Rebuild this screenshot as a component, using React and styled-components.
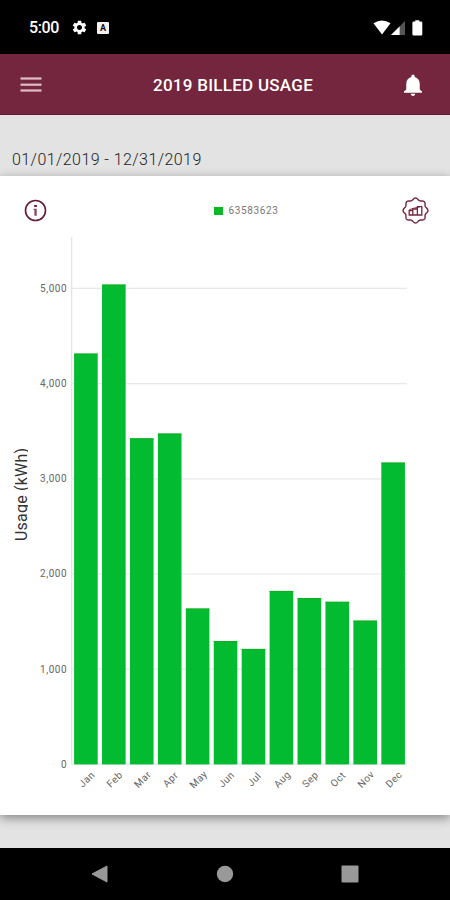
import React from 'react';
import styled, { createGlobalStyle } from 'styled-components';

const GlobalStyle = createGlobalStyle`
  body {
    margin: 0;
    background-color: #e3e3e3;
    font-family: Roboto, 'Liberation Sans', sans-serif;
  }
`;

const Screen = styled.div`
  display: flex;
  flex-direction: column;
  width: 450px;
  height: 900px;
  overflow: hidden;
  background-color: #e3e3e3;
`;

const StatusBar = styled.div`
  display: flex;
  justify-content: space-between;
  align-items: center;
  height: 54px;
  padding: 1px 27px 0 29px;
  box-sizing: border-box;
  background-color: #000;
  color: #fff;
`;

const StatusGroup = styled.div`
  display: flex;
  align-items: center;
  gap: ${(props) => props.$gap};
`;

const Clock = styled.span`
  width: 30px;
  font-size: 16px;
  font-weight: 500;
  letter-spacing: -0.4px;
  white-space: nowrap;
`;

const Header = styled.header`
  display: flex;
  justify-content: space-between;
  align-items: center;
  height: 61px;
  padding: 2px 28px 0 20px;
  box-sizing: border-box;
  background-color: #73263d;
  border-bottom: 1px solid #641a31;
`;

const HeaderTitle = styled.h1`
  margin: 0 0 0 20px;
  font-size: 17px;
  font-weight: 500;
  letter-spacing: 0.27px;
  color: #fff;
`;

const IconButton = styled.button`
  display: flex;
  padding: 0;
  border: none;
  background: none;
`;

const DateRange = styled.div`
  height: 61px;
  padding: 35px 12px 0;
  box-sizing: border-box;
  font-size: 16px;
  line-height: 20px;
  letter-spacing: 0.43px;
  font-weight: 300;
  color: #222;
`;

const Card = styled.section`
  display: flex;
  flex-direction: column;
  height: 639px;
  background-color: #fff;
  box-shadow: 0 3px 10px rgba(0, 0, 0, 0.42);
`;

const CardHeader = styled.div`
  display: flex;
  justify-content: space-between;
  align-items: center;
  height: 61px;
  padding: 8px 21px 0 24px;
  box-sizing: border-box;
`;

const Legend = styled.div`
  display: flex;
  align-items: center;
  gap: 6px;
  margin-left: 43px;
  font-size: 10px;
  letter-spacing: 0.6px;
  color: #777;
`;

const LegendMark = styled.span`
  width: 9px;
  height: 8px;
  background-color: #08b926;
`;

const Chart = styled.svg`
  display: block;
`;

const AxisText = styled.text`
  font-family: Roboto, 'Liberation Sans', sans-serif;
  font-size: ${(props) => props.$size || '10px'};
  letter-spacing: ${(props) => props.$spacing || '0'};
  fill: ${(props) => props.$color || '#666'};
`;

const NavBar = styled.nav`
  display: flex;
  justify-content: space-between;
  align-items: center;
  height: 52px;
  margin-top: auto;
  padding: 0 91px 0 90px;
  box-sizing: border-box;
  background-color: #000;
`;

const usage = [
  { month: 'Jan', kwh: 4315 },
  { month: 'Feb', kwh: 5040 },
  { month: 'Mar', kwh: 3425 },
  { month: 'Apr', kwh: 3475 },
  { month: 'May', kwh: 1637 },
  { month: 'Jun', kwh: 1295 },
  { month: 'Jul', kwh: 1213 },
  { month: 'Aug', kwh: 1822 },
  { month: 'Sep', kwh: 1748 },
  { month: 'Oct', kwh: 1708 },
  { month: 'Nov', kwh: 1510 },
  { month: 'Dec', kwh: 3170 },
];

const ticks = [0, 1000, 2000, 3000, 4000, 5000];

const BASELINE = 527.4;
const PX_PER_KWH = 0.0952;
const BAR_STEP = 27.93;
const BAR_WIDTH = 23.6;

const yFor = (kwh) => BASELINE - kwh * PX_PER_KWH;

// wavy outline of the badge, eight lobes
const badgePath = () => {
  const points = [];
  for (let i = 0; i < 128; i += 1) {
    const a = (i / 128) * Math.PI * 2;
    const r = 11.5 + 0.95 * Math.cos(a * 8);
    points.push(`${(13.5 + r * Math.sin(a)).toFixed(2)} ${(13.5 - r * Math.cos(a)).toFixed(2)}`);
  }
  return `M${points.join('L')}Z`;
};

const SettingsIcon = () => (
  <svg width="17" height="17" viewBox="0 0 24 24" fill="#fff">
    <path d="M19.14 12.94c.04-.3.06-.61.06-.94 0-.32-.02-.64-.07-.94l2.03-1.58c.18-.14.23-.41.12-.61l-1.92-3.32c-.12-.22-.37-.29-.59-.22l-2.39.96c-.5-.38-1.03-.7-1.62-.94l-.36-2.54c-.04-.24-.24-.41-.48-.41h-3.84c-.24 0-.43.17-.47.41l-.36 2.54c-.59.24-1.13.57-1.62.94l-2.39-.96c-.22-.08-.47 0-.59.22L2.74 8.87c-.12.21-.08.47.12.61l2.03 1.58c-.05.3-.09.63-.09.94s.02.64.07.94l-2.03 1.58c-.18.14-.23.41-.12.61l1.92 3.32c.12.22.37.29.59.22l2.39-.96c.5.38 1.03.7 1.62.94l.36 2.54c.05.24.24.41.48.41h3.84c.24 0 .44-.17.47-.41l.36-2.54c.59-.24 1.13-.56 1.62-.94l2.39.96c.22.08.47 0 .59-.22l1.92-3.32c.12-.22.07-.47-.12-.61l-2.01-1.58zM12 15.6c-1.98 0-3.6-1.62-3.6-3.6s1.62-3.6 3.6-3.6 3.6 1.62 3.6 3.6-1.62 3.6-3.6 3.6z" />
  </svg>
);

const KeyboardBadge = styled.span`
  display: flex;
  justify-content: center;
  align-items: center;
  width: 12px;
  height: 12px;
  margin-left: -3px;
  border-radius: 1px;
  background-color: #f2f2f2;
  color: #111;
  font-size: 9px;
  font-weight: 700;
  line-height: 12px;
`;

const WifiIcon = () => (
  <svg width="18" height="15" viewBox="0 0 18 15" fill="#fff">
    <path d="M0.5 3.3Q9 -2.2 17.5 3.3L9 14.5Z" />
  </svg>
);

const SignalIcon = () => (
  <svg width="14" height="14" viewBox="0 0 14 14">
    <path d="M0 14L14 0V14Z" fill="#555" />
    <path d="M0 14L8.6 5.4V14Z" fill="#fff" />
  </svg>
);

const BatterySvg = styled.svg`
  margin-left: 7px;
`;

const BatteryIcon = () => (
  <BatterySvg width="11" height="16" viewBox="0 0 11 16" fill="#fff">
    <path d="M3.3 0.3H7.3V1.6H9Q10.3 1.6 10.3 2.9V14.3Q10.3 15.6 9 15.6H1.7Q0.4 15.6 0.4 14.3V2.9Q0.4 1.6 1.7 1.6H3.3Z" />
  </BatterySvg>
);

const MenuIcon = () => (
  <svg width="22" height="17" viewBox="0 0 22 17" fill="#dfbdc8">
    <rect x="0.5" y="0.4" width="21" height="2.2" />
    <rect x="0.5" y="6.6" width="21" height="2.2" />
    <rect x="0.5" y="12.4" width="21" height="2.2" />
  </svg>
);

const BellIcon = () => (
  <svg width="18" height="22" viewBox="4 2 16 20" preserveAspectRatio="none" fill="#fff">
    <path d="M12 22c1.1 0 2-.9 2-2h-4c0 1.1.89 2 2 2zm6-6v-5c0-3.07-1.64-5.64-4.5-6.32V4c0-.83-.67-1.5-1.5-1.5s-1.5.67-1.5 1.5v.68C7.63 5.36 6 7.92 6 11v5l-2 2v1h16v-1l-2-2z" />
  </svg>
);

const InfoIcon = () => (
  <svg width="23" height="23" viewBox="0 0 23 23">
    <circle cx="11.5" cy="11.5" r="10" fill="none" stroke="#651b34" strokeWidth="1.6" />
    <rect x="10.1" y="6" width="2.8" height="2" fill="#73263d" />
    <path d="M9.6 9.7H12.7V16.7H10.4V11H9.6Z" fill="#84475a" />
  </svg>
);

const UsageBadgeIcon = () => (
  <svg width="27" height="27" viewBox="0 0 27 27" fill="none" stroke="#73263d">
    <path d={badgePath()} strokeWidth="1.4" />
    <path d="M7.2 18V13.6H10.8V18ZM10.8 18V12H15.4V18ZM15.4 18V9.6H19.8V18Z" strokeWidth="1.3" />
    <path d="M7 13L11 11.4L15 10.6L19.5 9.2" strokeWidth="1" />
  </svg>
);

const UsageChart = () => (
  <Chart width="450" height="578" viewBox="0 0 450 578">
    <defs>
      <clipPath id="axis-title">
        <rect x="0" y="0" width="28" height="578" />
      </clipPath>
    </defs>
    {ticks.map((tick) => (
      <g key={tick}>
        <line x1="72" x2="407" y1={yFor(tick)} y2={yFor(tick)} stroke="#e8e8e8" strokeWidth="1.2" />
        <AxisText x="67.2" y={yFor(tick) + 3.4} textAnchor="end" $spacing="0.55px">
          {tick.toLocaleString('en-US')}
        </AxisText>
      </g>
    ))}
    <line x1="71.7" x2="71.7" y1="0" y2={BASELINE} stroke="#e3e3e3" strokeWidth="1.2" />
    {usage.map(({ month, kwh }, index) => {
      const x = 74.1 + index * BAR_STEP;
      return (
        <g key={month}>
          <rect x={x} y={yFor(kwh)} width={BAR_WIDTH} height={kwh * PX_PER_KWH} fill="#03bb31" />
          <rect x={x} y={yFor(kwh)} width={BAR_WIDTH} height="1" fill="#12ad20" />
          <AxisText
            textAnchor="middle"
            $spacing="0.4px"
            transform={`translate(${x + 15} ${BASELINE + 17.4}) rotate(-45)`}
          >
            {month}
          </AxisText>
        </g>
      );
    })}
    <g clipPath="url(#axis-title)">
      <AxisText
        $size="16px"
        $color="#333"
        textAnchor="middle"
        textLength="93"
        transform="translate(26.6 257.5) rotate(-90)"
      >
        Usage (kWh)
      </AxisText>
    </g>
  </Chart>
);

const App = () => {
  return (
    <>
      <GlobalStyle />
      <Screen>
        <StatusBar>
          <StatusGroup $gap="12px">
            <Clock>5:00</Clock>
            <SettingsIcon />
            <KeyboardBadge>A</KeyboardBadge>
          </StatusGroup>
          <StatusGroup $gap="0">
            <WifiIcon />
            <SignalIcon />
            <BatteryIcon />
          </StatusGroup>
        </StatusBar>
        <Header>
          <IconButton aria-label="Menu">
            <MenuIcon />
          </IconButton>
          <HeaderTitle>2019 BILLED USAGE</HeaderTitle>
          <IconButton aria-label="Notifications">
            <BellIcon />
          </IconButton>
        </Header>
        <DateRange>01/01/2019 - 12/31/2019</DateRange>
        <Card>
          <CardHeader>
            <IconButton aria-label="Info">
              <InfoIcon />
            </IconButton>
            <Legend>
              <LegendMark />
              63583623
            </Legend>
            <IconButton aria-label="Chart settings">
              <UsageBadgeIcon />
            </IconButton>
          </CardHeader>
          <UsageChart />
        </Card>
        <NavBar>
          <svg width="18" height="18" viewBox="0 0 18 18">
            <path d="M2 9L17 1V17Z" fill="#999" stroke="#999" strokeLinejoin="round" />
          </svg>
          <svg width="18" height="18" viewBox="0 0 18 18">
            <circle cx="9" cy="9" r="8.2" fill="#999" />
          </svg>
          <svg width="18" height="18" viewBox="0 0 18 18">
            <rect x="0.5" y="0.5" width="17" height="17" rx="1" fill="#999" />
          </svg>
        </NavBar>
      </Screen>
    </>
  );
};

export default App;
